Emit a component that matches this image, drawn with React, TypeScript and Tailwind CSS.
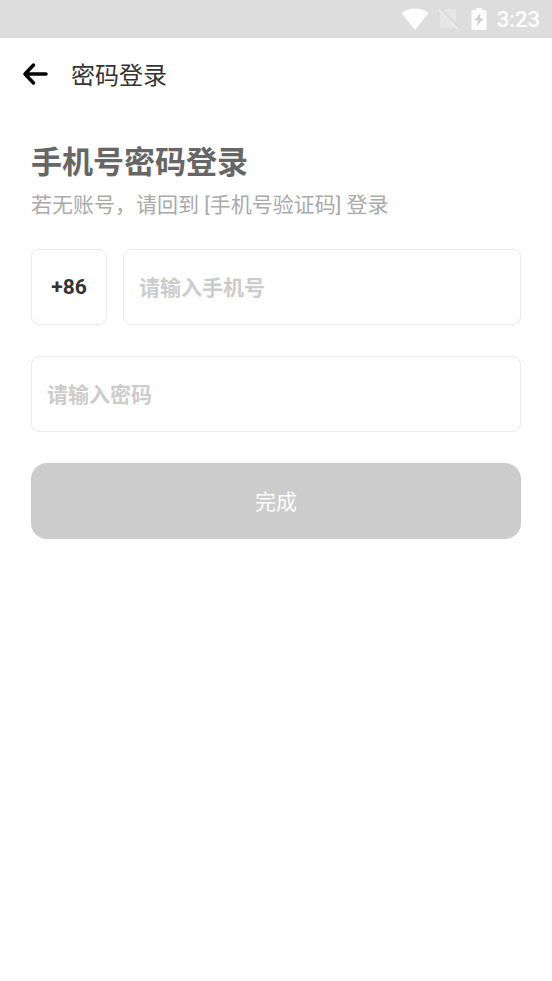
import { useState } from 'react';

/**
 * PasswordLogin – phone number + password sign-in screen
 */

export default function PasswordLogin() {
  const [phone, setPhone] = useState('');
  const [password, setPassword] = useState('');

  return (
    <div className="min-h-screen bg-white font-[Roboto,'Noto_Sans_CJK_SC',sans-serif] text-[#333333]">
      <StatusBar />

      {/* Header */}
      <header className="flex h-18 items-center gap-[22px] px-[21px]">
        <button type="button" aria-label="返回" className="text-black">
          <BackIcon />
        </button>
        <h1 className="pt-1 text-2xl">密码登录</h1>
      </header>

      {/* Login form */}
      <main className="px-[31px] pt-[35px]">
        <h2 className="text-[31px] leading-9 font-bold text-[#666666]">手机号密码登录</h2>
        <p className="mt-2 text-[21px] leading-8 text-[#aaaaaa]">若无账号，请回到 [手机号验证码] 登录</p>

        <form className="mt-7 space-y-[31px]" onSubmit={(e) => e.preventDefault()}>
          <div className="flex gap-4">
            <button
              type="button"
              className="h-[76px] w-[76px] shrink-0 rounded-lg border border-[#ebebeb] pt-0.5 text-[21px] font-bold"
            >
              +86
            </button>
            <input
              type="tel"
              aria-label="手机号"
              value={phone}
              onChange={(e) => setPhone(e.target.value)}
              placeholder="请输入手机号"
              className="h-[76px] w-full min-w-0 rounded-lg border border-[#ebebeb] px-[15px] pt-0.5 text-[21px] font-bold outline-none placeholder:text-[#cccccc]"
            />
          </div>
          <input
            type="password"
            aria-label="密码"
            value={password}
            onChange={(e) => setPassword(e.target.value)}
            placeholder="请输入密码"
            className="block h-[76px] w-full rounded-lg border border-[#ebebeb] px-[15px] pt-0.5 text-[21px] font-bold outline-none placeholder:text-[#cccccc]"
          />
          <button type="submit" className="block h-[76px] w-full rounded-2xl bg-[#cccccc] pt-1 text-[21px] text-white">
            完成
          </button>
        </form>
      </main>
    </div>
  );
}

/* Android system bar */
function StatusBar() {
  return (
    <div className="flex h-[38px] items-center justify-end bg-[#dddddd] pr-3 text-white">
      <svg width="28" height="22" viewBox="0 0 28 22" fill="currentColor" aria-hidden="true">
        <path d="M14 22 0.5 5C4 2 8.500 0.500 14 0.500S24 2 27.500 5Z" />
      </svg>
      <svg width="22" height="22" viewBox="0 0 22 22" className="ml-[10px]" aria-hidden="true">
        <path d="M8 1H17V20H1V7Z" fill="#e6e6e6" />
        <path d="M2 1 21 20" stroke="#dadada" strokeWidth="2" />
        <path d="M0 2 19 21" stroke="#e9e9e9" strokeWidth="2" />
      </svg>
      <svg width="16" height="22" viewBox="0 0 16 22" fill="currentColor" className="ml-[10px]" aria-hidden="true">
        <path d="M5 0H11V2H14.500Q15.500 2 15.500 3V21Q15.500 22 14.500 22H1.500Q0.500 22 0.500 21V3Q0.500 2 1.500 2H5Z" />
        <path d="M9.500 5 3.500 12.500H7L6 18.500 12.500 10.500H9Z" fill="#cfcfcf" />
      </svg>
      <span className="ml-[10px] pt-0.5 text-[22px] leading-6 font-medium">3:23</span>
    </div>
  );
}

function BackIcon() {
  return (
    <svg
      width="28"
      height="24"
      viewBox="0 0 28 24"
      fill="none"
      stroke="currentColor"
      strokeWidth="3.500"
      strokeLinecap="round"
      strokeLinejoin="round"
      aria-hidden="true"
    >
      <path d="M12.500 3 4 12 12.500 21M4 12H25" />
    </svg>
  );
}
